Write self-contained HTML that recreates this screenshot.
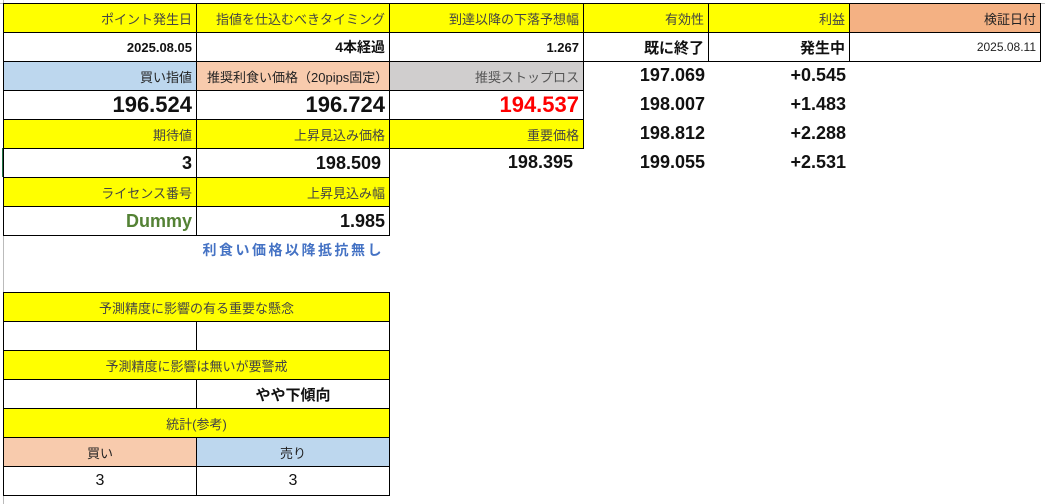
<!DOCTYPE html>
<html><head><meta charset="utf-8"><style>
body{margin:0;width:1045px;height:504px;background:#fff;position:relative;overflow:hidden;font-family:"Liberation Sans","Noto Sans CJK JP",sans-serif;}
.c{position:absolute;box-sizing:border-box;border:1px solid #000;display:flex;align-items:center;justify-content:flex-end;padding-right:4px;font-size:13px;color:#222;white-space:nowrap;}
.n{position:absolute;display:flex;align-items:center;justify-content:flex-end;white-space:nowrap;font-weight:bold;font-size:18px;color:#111;}
.y{background:#ffff00;color:#444;}
.ctr{justify-content:center;padding-right:0;}
.b{font-weight:bold;color:#111;}
.big{font-size:22px;font-weight:bold;color:#111;}
</style></head><body>
<div style="position:absolute;left:3px;top:0;width:1px;height:504px;background:#bbb"></div>
<div style="position:absolute;left:0;top:3px;width:1045px;height:1px;background:#bbb"></div>
<div style="position:absolute;left:2px;top:148px;width:2px;height:29px;background:#217346"></div>

<!-- row0 -->
<div class="c y" style="left:3px;top:3px;width:194px;height:30px">ポイント発生日</div>
<div class="c y" style="left:196px;top:3px;width:194px;height:30px">指値を仕込むべきタイミング</div>
<div class="c y" style="left:389px;top:3px;width:195px;height:30px">到達以降の下落予想幅</div>
<div class="c y" style="left:583px;top:3px;width:126px;height:30px">有効性</div>
<div class="c y" style="left:708px;top:3px;width:142px;height:30px">利益</div>
<div class="c" style="left:849px;top:3px;width:192px;height:30px;background:#f4b183">検証日付</div>
<!-- row1 -->
<div class="c b" style="left:3px;top:32px;width:194px;height:30px">2025.08.05</div>
<div class="c b" style="left:196px;top:32px;width:194px;height:30px;font-size:14px">4本経過</div>
<div class="c b" style="left:389px;top:32px;width:195px;height:30px">1.267</div>
<div class="c b" style="left:583px;top:32px;width:126px;height:30px;font-size:15px">既に終了</div>
<div class="c b" style="left:708px;top:32px;width:142px;height:30px;font-size:15px">発生中</div>
<div class="c" style="left:849px;top:32px;width:192px;height:30px;font-size:12px">2025.08.11</div>
<!-- row2 -->
<div class="c" style="left:3px;top:61px;width:194px;height:30px;background:#bdd7ee">買い指値</div>
<div class="c" style="left:196px;top:61px;width:194px;height:30px;background:#f8cbad;justify-content:flex-start;padding-left:10px">推奨利食い価格（20pips固定）</div>
<div class="c" style="left:389px;top:61px;width:195px;height:30px;background:#d0cece;color:#555">推奨ストップロス</div>
<!-- row3 -->
<div class="c big" style="left:3px;top:90px;width:194px;height:30px">196.524</div>
<div class="c big" style="left:196px;top:90px;width:194px;height:30px">196.724</div>
<div class="c big" style="left:389px;top:90px;width:195px;height:30px;color:#ff0000">194.537</div>
<!-- row4 -->
<div class="c y" style="left:3px;top:119px;width:194px;height:30px">期待値</div>
<div class="c y" style="left:196px;top:119px;width:194px;height:30px">上昇見込み価格</div>
<div class="c y" style="left:389px;top:119px;width:195px;height:30px">重要価格</div>
<!-- row5 -->
<div class="c b" style="left:3px;top:148px;width:194px;height:30px;font-size:18px">3</div>
<div class="c b" style="left:196px;top:148px;width:194px;height:30px;font-size:18px;padding-right:8px">198.509</div>
<div class="n" style="left:389px;top:148px;width:184px;height:29px">198.395</div>
<!-- row6 -->
<div class="c y" style="left:3px;top:177px;width:194px;height:30px">ライセンス番号</div>
<div class="c y" style="left:196px;top:177px;width:194px;height:30px">上昇見込み幅</div>
<!-- row7 -->
<div class="c b" style="left:3px;top:206px;width:194px;height:30px;font-size:18px;color:#548235">Dummy</div>
<div class="c b" style="left:196px;top:206px;width:194px;height:30px;font-size:18px">1.985</div>

<!-- right numbers -->
<div class="n" style="left:583px;top:61px;width:122px;height:29px">197.069</div>
<div class="n" style="left:708px;top:61px;width:138px;height:29px">+0.545</div>
<div class="n" style="left:583px;top:90px;width:122px;height:29px">198.007</div>
<div class="n" style="left:708px;top:90px;width:138px;height:29px">+1.483</div>
<div class="n" style="left:583px;top:119px;width:122px;height:29px">198.812</div>
<div class="n" style="left:708px;top:119px;width:138px;height:29px">+2.288</div>
<div class="n" style="left:583px;top:148px;width:122px;height:29px">199.055</div>
<div class="n" style="left:708px;top:148px;width:138px;height:29px">+2.531</div>

<div class="n" style="left:196px;top:235px;width:188px;height:29px;font-size:14px;color:#4472c4;letter-spacing:2.5px">利食い価格以降抵抗無し</div>

<!-- lower table -->
<div class="c y ctr" style="left:3px;top:292px;width:387px;height:30px">予測精度に影響の有る重要な懸念</div>
<div class="c" style="left:3px;top:321px;width:194px;height:30px"></div>
<div class="c" style="left:196px;top:321px;width:194px;height:30px"></div>
<div class="c y ctr" style="left:3px;top:350px;width:387px;height:30px">予測精度に影響は無いが要警戒</div>
<div class="c" style="left:3px;top:379px;width:194px;height:30px"></div>
<div class="c b ctr" style="left:196px;top:379px;width:194px;height:30px;font-size:15px">やや下傾向</div>
<div class="c y ctr" style="left:3px;top:408px;width:387px;height:30px">統計(参考)</div>
<div class="c ctr" style="left:3px;top:437px;width:194px;height:30px;background:#f8cbad">買い</div>
<div class="c ctr" style="left:196px;top:437px;width:194px;height:30px;background:#bdd7ee">売り</div>
<div class="c ctr" style="left:3px;top:466px;width:194px;height:30px;font-size:16px;color:#111">3</div>
<div class="c ctr" style="left:196px;top:466px;width:194px;height:30px;font-size:16px;color:#111">3</div>
</body></html>
